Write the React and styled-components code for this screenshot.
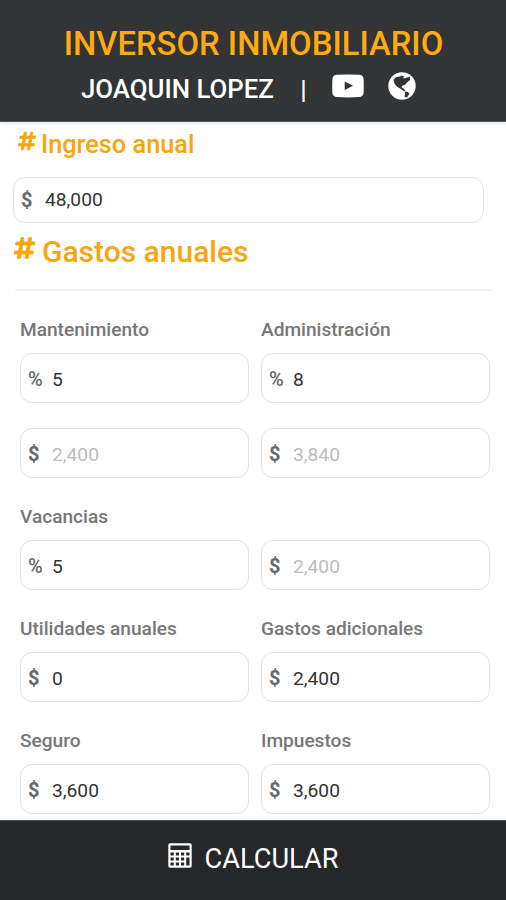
import React from "react";
import styled, { createGlobalStyle } from "styled-components";
// icon
import { FaHashtag } from "react-icons/fa";

const fields = [
  { label: "Mantenimiento", sign: "%", value: "5" },
  { label: "Administración", sign: "%", value: "8" },
  { sign: "$", placeholder: "2,400" },
  { sign: "$", placeholder: "3,840" },
  { label: "Vacancias", sign: "%", value: "5" },
  { label: "", sign: "$", placeholder: "2,400" },
  { label: "Utilidades anuales", sign: "$", value: "0" },
  { label: "Gastos adicionales", sign: "$", value: "2,400" },
  { label: "Seguro", sign: "$", value: "3,600" },
  { label: "Impuestos", sign: "$", value: "3,600" },
];

function YoutubeIcon() {
  return (
    <svg width="32" height="24" viewBox="0 0 32 24">
      <path
        fill="#fff"
        fillRule="evenodd"
        d="M5 .8Q16 0 27 .8Q31.3 1 31.6 5Q32 12 31.6 19Q31.3 22.7 27 23Q16 23.8 5 23Q.7 22.7 .4 19Q0 12 .4 5Q.7 1 5 .8ZM12.7 7.6V16L21 11.8Z"
      />
    </svg>
  );
}

function GlobeIcon() {
  return (
    <svg width="28" height="28" viewBox="0 0 28 28">
      <circle cx="14" cy="14" r="13.7" fill="#fff" />
      <path
        fill="#323436"
        d="M5.5 8L8 5L12 4.6L13.5 3.5L16 4.5L15.2 6.4L17.5 6L21.8 4.5L22 8L19 10.6L17 13L14.6 13.6L13.4 15.2L15.2 16.2L17.5 19L16 19.2L12.5 16.8L9 14.8L6.6 12Z"
      />
      <path fill="#323436" d="M16.5 19.5L20 20L21.4 21.8L19 25.4L16.3 24.6L17.2 22Z" />
    </svg>
  );
}

function CalculatorIcon() {
  return (
    <svg width="24" height="25" viewBox="0 0 24 25">
      <rect x=".3" y=".3" width="23.4" height="24.4" rx="2" fill="#fff" />
      <path
        fill="#262729"
        d="M2.5 2.5H21.5V7H2.5ZM2.5 9.5H5.8V12.5H2.5ZM7.8 9.5H11V12.5H7.8ZM13 9.5H16.2V12.5H13ZM18.2 9.5H21.5V12.5H18.2ZM2.5 14.5H5.8V17.5H2.5ZM7.8 14.5H11V17.5H7.8ZM13 14.5H16.2V17.5H13ZM2.5 19.5H5.8V22.5H2.5ZM7.8 19.5H11V22.5H7.8ZM13 19.5H16.2V22.5H13ZM18.2 14.5H21.5V22.5H18.2Z"
      />
    </svg>
  );
}

function MoneyField({ label, sign, value, placeholder }) {
  return (
    <Field>
      {label !== undefined && <Label>{label}</Label>}
      <InputBox>
        <Sign $bold={sign === "$"}>{sign}</Sign>
        <Input defaultValue={value} placeholder={placeholder} />
      </InputBox>
    </Field>
  );
}

function App() {
  return (
    <Screen>
      <GlobalStyle />
      <Header>
        <Title>INVERSOR INMOBILIARIO</Title>
        <Author>
          <Name>JOAQUIN LOPEZ</Name>
          <Divider>|</Divider>
          <Links>
            <YoutubeIcon />
            <GlobeIcon />
          </Links>
        </Author>
      </Header>

      <Content>
        <IncomeTitle>
          <FaHashtag />
          <span>Ingreso anual</span>
        </IncomeTitle>
        <IncomeBox>
          <Sign $bold>$</Sign>
          <Input defaultValue="48,000" />
        </IncomeBox>

        <ExpensesTitle>
          <FaHashtag />
          <span>Gastos anuales</span>
        </ExpensesTitle>
        <Line />

        <Fields>
          {fields.map((field, i) => (
            <MoneyField key={i} {...field} />
          ))}
        </Fields>
      </Content>

      <CalcButton>
        <CalculatorIcon />
        <span>CALCULAR</span>
      </CalcButton>
    </Screen>
  );
}

const GlobalStyle = createGlobalStyle`
  * {
    box-sizing: border-box;
  }
  body {
    margin: 0;
    background: #fefefe;
    font-family: Roboto, "Liberation Sans", sans-serif;
  }
`;

const Screen = styled.div`
  display: flex;
  flex-direction: column;
  height: 900px;
  overflow: hidden;
`;

const Header = styled.header`
  flex: none;
  height: 122px;
  padding-top: 24px;
  background: #323436;
  border-bottom: 1px solid #5a5a5a;
  box-shadow: 0 1px 4px rgba(0, 0, 0, 0.12);
`;

const Title = styled.h1`
  margin: 0;
  padding-left: 1px;
  text-align: center;
  color: #ffab10;
  font-size: 32.8px;
  font-weight: 500;
  line-height: 40px;
`;

const Author = styled.div`
  display: flex;
  align-items: center;
  height: 50px;
  padding-left: 81px;
  color: #fff;
`;

const Name = styled.div`
  width: 194px;
  font-size: 25.8px;
  font-weight: 500;
  white-space: nowrap;
`;

const Divider = styled.div`
  width: 57px;
  padding-top: 2px;
  text-align: center;
  font-size: 26px;
  font-weight: 500;
`;

const Links = styled.div`
  display: flex;
  align-items: center;
  gap: 24px;
  height: 28px;
  margin-bottom: 6px;
`;

const Content = styled.main`
  flex: 1;
  min-height: 0;
  overflow: hidden;
`;

const SectionTitle = styled.h2`
  display: flex;
  align-items: flex-start;
  margin: 0;
  color: #f8a510;
  font-weight: 500;
  svg {
    stroke: currentColor;
    stroke-width: 18px;
  }
`;

const IncomeTitle = styled(SectionTitle)`
  padding: 8px 0 0 18px;
  height: 55px;
  gap: 5px;
  font-size: 25.3px;
  line-height: 30px;
  svg {
    width: 18px;
    height: 20px;
    margin-top: 1px;
  }
`;

const ExpensesTitle = styled(SectionTitle)`
  padding: 11px 0 0 14px;
  height: 66px;
  gap: 6px;
  font-size: 30px;
  line-height: 36px;
  svg {
    width: 21px;
    height: 24px;
    margin-top: 2px;
    margin-right: 1px;
  }
`;

const Line = styled.div`
  height: 2px;
  margin: 0 14px 0 15px;
  background: #f3f3f3;
`;

const InputBox = styled.label`
  display: flex;
  align-items: center;
  height: 49.5px;
  padding-left: 7px;
  border: 1.5px solid #e2e2e2;
  border-radius: 12px;
  background: #fefefe;
`;

const IncomeBox = styled(InputBox)`
  width: 471px;
  height: 45.5px;
  margin: 0 0 0.5px 13px;
  padding-bottom: 3px;
`;

const Sign = styled.span`
  width: 24px;
  padding-top: 3px;
  color: #68696a;
  font-size: 20px;
  font-weight: ${(props) => (props.$bold ? 700 : 500)};
`;

const Input = styled.input`
  flex: 1;
  min-width: 0;
  padding: 3px 0 0;
  border: 0;
  outline: 0;
  background: transparent;
  color: #333;
  font-family: inherit;
  font-size: 19.2px;
  &::placeholder {
    color: #bcbcbc;
  }
`;

const Fields = styled.div`
  display: grid;
  grid-template-columns: 229px 229px;
  column-gap: 12px;
  row-gap: 25.5px;
  padding: 25px 0 0 20px;
`;

const Field = styled.div``;

const Label = styled.div`
  height: 25px;
  margin-bottom: 12px;
  color: #777;
  font-size: 19.1px;
  font-weight: 500;
  line-height: 27px;
`;

const CalcButton = styled.button`
  display: flex;
  flex: none;
  align-items: center;
  justify-content: center;
  gap: 13px;
  height: 80px;
  padding: 0 0 4px;
  border: 0;
  border-top: 1px solid #505253;
  background: #262729;
  color: #fff;
  font-family: inherit;
  font-size: 27.2px;
  svg {
    margin-bottom: 7px;
  }
`;

export default App;
